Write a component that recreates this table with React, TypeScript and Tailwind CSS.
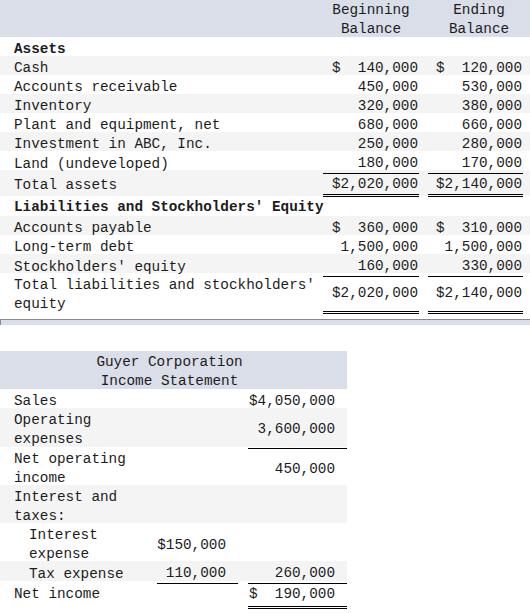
import React from "react";

const FONT =
  "font-['Liberation_Mono','Courier_New',monospace] text-[14.33px] text-[#1c1c1c]";

type UL = "none" | "single" | "double";

function ulClass(u: UL) {
  if (u === "single") return "border-b border-black";
  if (u === "double") return "border-b-[3px] border-double border-black";
  return "";
}

function BRow({
  label,
  a,
  b,
  gray,
  bold,
  ul = "none",
  h,
  innerPad = "pt-[3px]",
}: {
  label: React.ReactNode;
  a?: string;
  b?: string;
  gray?: boolean;
  bold?: boolean;
  ul?: UL;
  h: string;
  innerPad?: string;
}) {
  return (
    <div
      className={`grid grid-cols-[323px_105px_102px] ${h} ${
        gray ? "bg-[#f4f4f4]" : "bg-white"
      }`}
    >
      <div
        className={`pl-[14px] pr-[4px] pt-[3px] self-center leading-[19px] ${
          bold ? "font-bold" : ""
        }`}
      >
        {label}
      </div>
      <div className="pr-[9px] h-full">
        <div
          className={`h-full flex items-center justify-end pr-[1px] whitespace-pre leading-[19px] ${innerPad} ${
            a !== undefined ? ulClass(ul) : ""
          }`}
        >
          {a}
        </div>
      </div>
      <div className="pr-[7px] h-full">
        <div
          className={`h-full flex items-center justify-end pr-[1px] whitespace-pre leading-[19px] ${innerPad} ${
            b !== undefined ? ulClass(ul) : ""
          }`}
        >
          {b}
        </div>
      </div>
    </div>
  );
}

function IRow({
  label,
  a,
  b,
  gray,
  indent,
  ulA = "none",
  ulB = "none",
  h,
  innerPad = "items-center pt-[3px]",
  labelCls = "self-center pt-[3px]",
}: {
  label: React.ReactNode;
  a?: string;
  b?: string;
  gray?: boolean;
  indent?: boolean;
  ulA?: UL;
  ulB?: UL;
  h: string;
  innerPad?: string;
  labelCls?: string;
}) {
  return (
    <div
      className={`grid grid-cols-[150px_93px_104px] ${h} ${
        gray ? "bg-[#f4f4f4]" : "bg-white"
      }`}
    >
      <div
        className={`${indent ? "pl-[29px]" : "pl-[14px]"} pr-[6px] leading-[19px] ${labelCls}`}
      >
        {label}
      </div>
      <div className="pl-[7px] pr-[5px] h-full">
        <div
          className={`h-full flex justify-end pr-[12px] whitespace-pre leading-[19px] ${innerPad} ${ulClass(
            ulA
          )}`}
        >
          {a}
        </div>
      </div>
      <div className="pl-[5px] h-full">
        <div
          className={`h-full flex justify-end pr-[12px] whitespace-pre leading-[19px] ${innerPad} ${ulClass(
            ulB
          )}`}
        >
          {b}
        </div>
      </div>
    </div>
  );
}

export default function App() {
  return (
    <div className={`w-[530px] h-[613px] bg-white overflow-hidden ${FONT}`}>
      {/* Balance sheet */}
      <div className="w-[530px]">
        <div className="grid grid-cols-[323px_105px_102px] h-[37px] bg-[#dadee9] leading-[18.5px] pt-[1px]">
          <div />
          <div className="pr-[9px] text-center">
            <div>Beginning</div>
            <div>Balance</div>
          </div>
          <div className="text-center">
            <div>Ending</div>
            <div>Balance</div>
          </div>
        </div>
        <BRow h="h-[19px]" label="Assets" bold />
        <BRow h="h-[19px]" gray label="Cash" a="$  140,000" b="$  120,000" />
        <BRow h="h-[19px]" label="Accounts receivable" a="450,000" b="530,000" />
        <BRow h="h-[19px]" gray label="Inventory" a="320,000" b="380,000" />
        <BRow h="h-[19px]" label="Plant and equipment, net" a="680,000" b="660,000" />
        <BRow h="h-[19px]" gray label="Investment in ABC, Inc." a="250,000" b="280,000" />
        <BRow h="h-[19px]" label="Land (undeveloped)" a="180,000" b="170,000" ul="single" />
        <BRow
          h="h-[26px]"
          gray
          label="Total assets"
          a="$2,020,000"
          b="$2,140,000"
          ul="double"
          innerPad="pt-[5px]"
        />
        <div className="h-[20px] leading-[20px] pt-[1px] pl-[14px] font-bold bg-white">
          Liabilities and Stockholders' Equity
        </div>
        <BRow h="h-[19px]" gray label="Accounts payable" a="$  360,000" b="$  310,000" />
        <BRow h="h-[19px]" label="Long-term debt" a="1,500,000" b="1,500,000" />
        <BRow h="h-[19px]" gray label="Stockholders' equity" a="160,000" b="330,000" ul="single" />
        <BRow
          h="h-[40px]"
          label="Total liabilities and stockholders' equity"
          a="$2,020,000"
          b="$2,140,000"
          ul="double"
        />
        <div className="h-[6px]" />
        <div className="h-[6px] bg-[#dadee9] border-t border-l border-[#8a8a8a]" />
      </div>

      <div className="h-[26px]" />

      {/* Income statement */}
      <div className="w-[347px]">
        <div className="h-[38px] bg-[#dadee9] leading-[19px] pt-[2px]">
          <div className="w-[339px] text-center">
            <div>Guyer Corporation</div>
            <div>Income Statement</div>
          </div>
        </div>
        <IRow h="h-[19px]" label="Sales" b="$4,050,000" />
        <IRow h="h-[39px]" gray label="Operating expenses" b="3,600,000" ulB="single" />
        <IRow h="h-[38px]" label="Net operating income" b="450,000" />
        <IRow h="h-[38px]" gray label="Interest and taxes:" />
        <IRow h="h-[38px]" indent label="Interest expense" a="$150,000" />
        <IRow
          h="h-[20px]"
          gray
          indent
          label="Tax expense"
          a="110,000"
          b="260,000"
          ulA="single"
          ulB="single"
        />
        <IRow
          h="h-[28px]"
          label="Net income"
          b="$  190,000"
          ulB="double"
          innerPad="items-start pt-[4px]"
          labelCls="self-start pt-[4px]"
        />
      </div>
    </div>
  );
}
